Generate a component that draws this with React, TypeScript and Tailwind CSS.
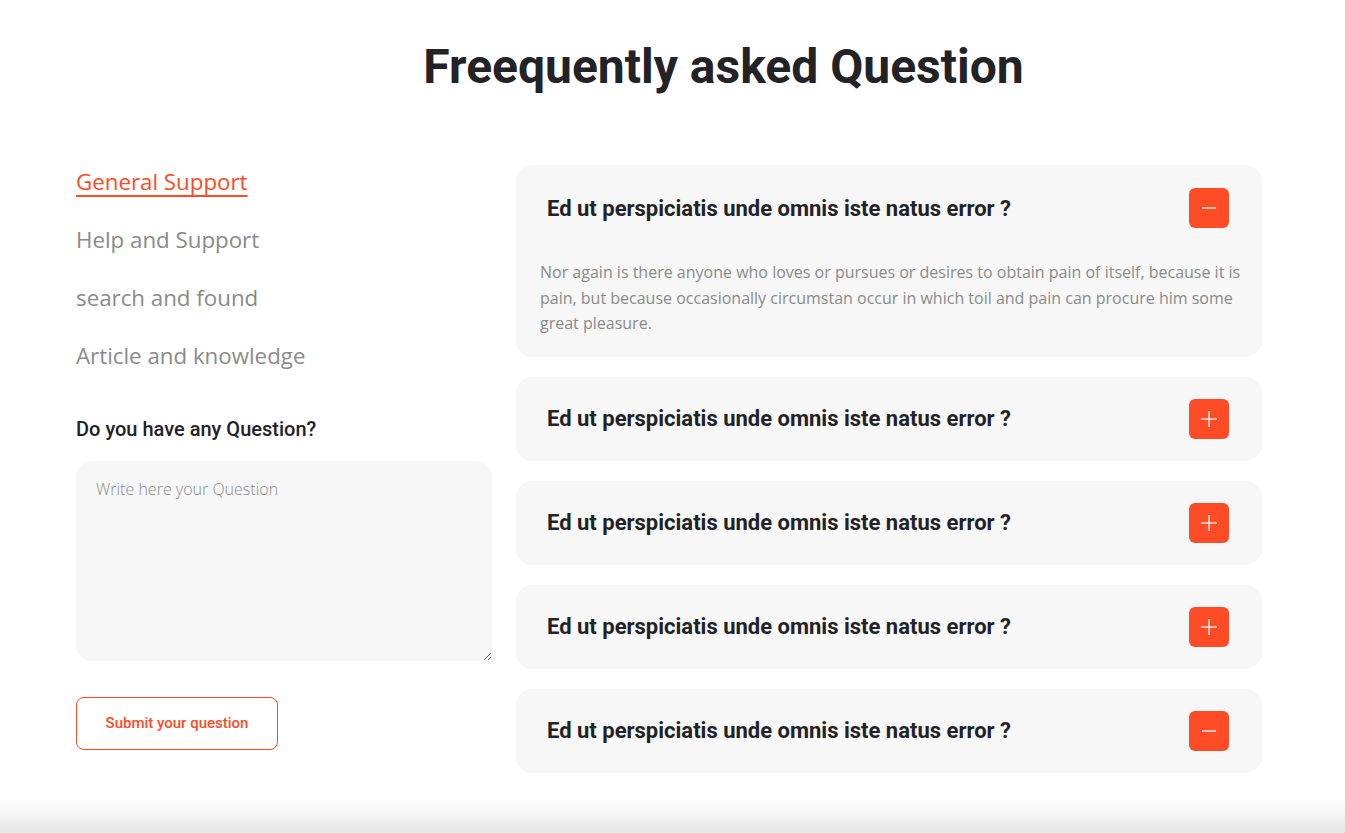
import { useState } from "react";

const categories = [
  "General Support",
  "Help and Support",
  "search and found",
  "Article and knowledge",
];

const answer =
  "Nor again is there anyone who loves or pursues or desires to obtain pain of itself, because it is pain, but because occasionally circumstan occur in which toil and pain can procure him some great pleasure.";

const faqs = [
  { q: "Ed ut perspiciatis unde omnis iste natus error ?", open: true, minus: true },
  { q: "Ed ut perspiciatis unde omnis iste natus error ?", open: false, minus: false },
  { q: "Ed ut perspiciatis unde omnis iste natus error ?", open: false, minus: false },
  { q: "Ed ut perspiciatis unde omnis iste natus error ?", open: false, minus: false },
  { q: "Ed ut perspiciatis unde omnis iste natus error ?", open: false, minus: true },
];

export default function App() {
  const [active, setActive] = useState(0);

  return (
    <div className="min-h-[833px] bg-white font-['Roboto',sans-serif] text-[#222227]">
      <div className="pt-[37px] pb-[68px] pl-[102px] text-center">
        <h1 className="text-[48px] font-bold leading-[60px]">
          Freequently asked Question
        </h1>
      </div>

      <div className="flex gap-6 pl-[76px]">
        {/* left column */}
        <div className="w-[416px] shrink-0">
          <ul className="flex flex-col gap-[26px] pt-[1px] font-['Open_Sans',sans-serif] text-[22.3px] leading-[32px]">
            {categories.map((c, i) => (
              <li key={c}>
                <button
                  onClick={() => setActive(i)}
                  className={
                    i === active
                      ? "text-[#ff4a26] underline underline-offset-[5px] decoration-[1.5px]"
                      : "text-[#8a8a8a]"
                  }
                >
                  {c}
                </button>
              </li>
            ))}
          </ul>

          <p className="mt-[43px] text-[20px] font-medium leading-[28px]">
            Do you have any Question?
          </p>

          <textarea
            placeholder="Write here your Question"
            className="mt-[18px] block h-[200px] w-[416px] rounded-[16px] bg-[#f7f7f7] px-5 py-[16px] font-['Open_Sans',sans-serif] text-[16px] font-light text-[#555] placeholder:text-[#8a8a8a] outline-none"
          />

          <button className="mt-[36px] h-[53px] w-[202px] rounded-[8px] border border-[#ff4a26] text-[15px] font-medium text-[#ff4a26]">
            Submit your question
          </button>
        </div>

        {/* right column */}
        <div className="flex w-[746px] flex-col gap-5">
          {faqs.map((f, i) => (
            <div
              key={i}
              className={
                f.open
                  ? "rounded-[16px] bg-[#f7f7f7] pt-[23px] pb-[20px]"
                  : "rounded-[16px] bg-[#f7f7f7] pt-[22px] pb-[22px]"
              }
            >
              <div className="flex items-center justify-between pl-[31px] pr-[33px]">
                <h3 className="pt-[1px] text-[22px] font-bold leading-[28px]">{f.q}</h3>
                <span className="flex h-10 w-10 items-center justify-center rounded-[6px] bg-[#ff4b26]">
                  {f.minus ? (
                    <svg width="16" height="16" viewBox="0 0 16 16">
                      <path d="M1 8h14" stroke="#fde2da" strokeWidth="1.6" />
                    </svg>
                  ) : (
                    <svg width="18" height="18" viewBox="0 0 18 18">
                      <path d="M1 9h16M9 1v16" stroke="#fde2da" strokeWidth="1.6" />
                    </svg>
                  )}
                </span>
              </div>
              {f.open && (
                <p className="mt-[32px] pl-6 pr-5 font-['Open_Sans',sans-serif] text-[16px] leading-[25.5px] text-[#8a8a8a]">
                  {answer}
                </p>
              )}
            </div>
          ))}
        </div>
      </div>

      <div className="mt-[26px] h-[34px] bg-gradient-to-b from-white to-[#e6e6e6]" />
    </div>
  );
}
